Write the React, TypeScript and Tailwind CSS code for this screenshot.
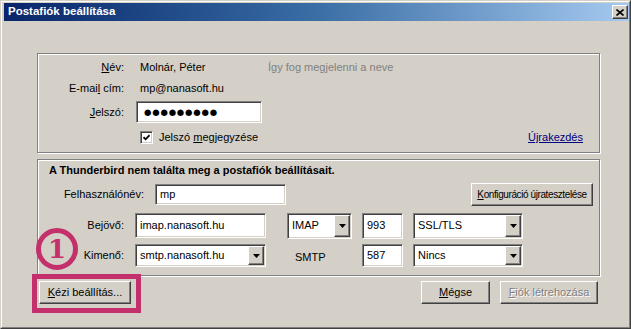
import type { ReactNode } from "react";

const sunken =
  "border border-t-[#808080] border-l-[#808080] border-b-white border-r-white shadow-[inset_1px_1px_0_#404040,inset_-1px_-1px_0_#d4d0c8] bg-white";
const raised =
  "border border-t-white border-l-white border-b-[#404040] border-r-[#404040] shadow-[inset_-1px_-1px_0_#808080] bg-[#d4d0c8]";
const etched =
  "border border-[#808080] shadow-[inset_1px_1px_0_white,1px_1px_0_white]";

function Arrow() {
  return (
    <div className={`${raised} flex h-full w-[16px] shrink-0 items-center justify-center`}>
      <svg width="7" height="4" viewBox="0 0 7 4">
        <polygon points="0,0 7,0 3.5,4" fill="#000" />
      </svg>
    </div>
  );
}

function Field({
  w,
  h,
  text,
  combo,
  className = "",
}: {
  w: string;
  h: string;
  text: ReactNode;
  combo?: boolean;
  className?: string;
}) {
  return (
    <div className={`${sunken} ${w} ${h} ${className} flex shrink-0 items-stretch p-[1px]`}>
      <div className="flex flex-1 items-center overflow-hidden whitespace-nowrap pl-[3px] text-black">
        {text}
      </div>
      {combo ? <Arrow /> : null}
    </div>
  );
}

function Label({ w, children }: { w: string; children: ReactNode }) {
  return <div className={`${w} shrink-0 text-right text-black`}>{children}</div>;
}

function Button({
  w,
  children,
  disabled,
  className = "",
}: {
  w: string;
  children: ReactNode;
  disabled?: boolean;
  className?: string;
}) {
  return (
    <div
      className={`${raised} ${w} ${className} flex h-[23px] shrink-0 items-center justify-center whitespace-nowrap ${
        disabled ? "text-[#808080] [text-shadow:1px_1px_0_#fff]" : "text-black"
      }`}
    >
      {children}
    </div>
  );
}

export default function App() {
  return (
    <div className="relative h-[329px] w-[631px] overflow-hidden bg-[#d4d0c8] font-['Liberation_Sans',Arial,sans-serif] text-[11px] leading-none">
      <div className="h-full w-full border border-t-[#d4d0c8] border-l-[#d4d0c8] border-b-[#404040] border-r-[#404040]">
        <div className="flex h-full w-full flex-col border border-t-white border-l-white border-b-[#808080] border-r-[#808080] pl-[2px] pt-[1px] pb-[1px]">
          {/* title bar */}
          <div className="flex h-[18px] shrink-0 items-center justify-between bg-linear-to-r from-[#0a246a] via-[#3a6ea5] to-[#a6caf0] pl-[4px] pr-[1px]">
            <span className="text-[11.5px] font-bold text-white">Postafiók beállítása</span>
            <div className={`${raised} flex h-[14px] w-[16px] items-center justify-center`}>
              <svg width="8" height="7" viewBox="0 0 8 7">
                <path d="M0.5 0.5 L7.5 6.5 M7.5 0.5 L0.5 6.5" stroke="#000" strokeWidth="1.6" />
              </svg>
            </div>
          </div>

          {/* body */}
          <div className="flex flex-1 flex-col pl-[33px] pr-[29px]">
            <div className={`${etched} mt-[32px] w-[563px] pt-[3px] pb-[5px]`}>
              <div className="flex h-[20px] items-center">
                <Label w="w-[86px]">
                  <u>N</u>év:
                </Label>
                <div className="ml-[12px] w-[132px] pl-[4px]">Molnár, Péter</div>
                <div className="text-[#808080]">Így fog megjelenni a neve</div>
              </div>
              <div className="flex h-[22px] items-center">
                <Label w="w-[86px]">
                  E-mai<u>l</u> cím:
                </Label>
                <div className="ml-[12px] pl-[4px]">mp@nanasoft.hu</div>
              </div>
              <div className="mt-[2px] flex h-[22px] items-center">
                <Label w="w-[86px]">
                  <u>J</u>elszó:
                </Label>
                <Field
                  w="w-[126px]"
                  h="h-[22px]"
                  className="ml-[12px]"
                  text={
                    <span className="pl-[3px] font-['DejaVu_Sans',sans-serif] text-[8.5px] tracking-[0.8px]">
                      ●●●●●●●●●
                    </span>
                  }
                />
              </div>
              <div className="mt-[4px] flex h-[20px] items-center">
                <div className="w-[86px] shrink-0" />
                <div className={`${sunken} ml-[16px] flex h-[13px] w-[13px] items-center justify-center`}>
                  <svg width="7" height="7" viewBox="0 0 7 7">
                    <path d="M0.5 3.2 L2.6 5.3 L6.5 1.2" stroke="#000" strokeWidth="1.7" fill="none" />
                  </svg>
                </div>
                <div className="ml-[6px]">
                  Jelszó <u>m</u>egjegyzése
                </div>
                <div className="ml-auto mr-[16px] text-[#000080] underline">Újrakezdés</div>
              </div>
            </div>

            <div className={`${etched} mt-[6px] w-[563px] pb-[8px]`}>
              <div className="flex h-[20px] items-center pl-[11px] font-bold">
                A Thunderbird nem találta meg a postafiók beállításait.
              </div>
              <div className="mt-[4px] flex h-[21px] items-center">
                <Label w="w-[106px]">Felhasználónév:</Label>
                <Field w="w-[131px]" h="h-[21px]" className="ml-[11px]" text="mp" />
                <Button w="w-[122px]" className="ml-auto mr-[6px] h-[21px]">
                  <span className="text-[10px] tracking-[-0.4px]">
                    <u>K</u>onfiguráció újratesztelése
                  </span>
                </Button>
              </div>
              <div className="mt-[8px] flex h-[25px] items-center">
                <Label w="w-[86px]">Bejövő:</Label>
                <Field w="w-[131px]" h="h-[25px]" className="ml-[11px]" text="imap.nanasoft.hu" />
                <Field w="w-[65px]" h="h-[26px]" className="ml-[21px]" text="IMAP" combo />
                <Field w="w-[41px]" h="h-[26px]" className="ml-[10px]" text="993" />
                <Field w="w-[110px]" h="h-[26px]" className="ml-[10px]" text="SSL/TLS" combo />
              </div>
              <div className="mt-[6px] flex h-[23px] items-center">
                <Label w="w-[86px]">Kimenő:</Label>
                <Field w="w-[131px]" h="h-[23px]" className="ml-[11px]" text="smtp.nanasoft.hu" combo />
                <div className="ml-[29px] w-[67px] shrink-0 pt-[4px]">SMTP</div>
                <Field w="w-[41px]" h="h-[23px]" text="587" />
                <Field w="w-[110px]" h="h-[23px]" className="ml-[10px]" text="Nincs" combo />
              </div>
            </div>

            <div className="mt-[5px] flex items-center">
              <Button w="w-[92px]" className="ml-[2px]">
                <span>
                  <u>K</u>ézi beállítás...
                </span>
              </Button>
              <Button w="w-[69px]" className="ml-auto">
                <span>
                  <u>M</u>égse
                </span>
              </Button>
              <Button w="w-[98px]" disabled className="ml-[10px] mr-[2px]">
                <span>
                  <u>F</u>iók létrehozása
                </span>
              </Button>
            </div>
          </div>
        </div>
      </div>

      {/* annotation overlay */}
      <div className="absolute left-[32px] top-[274px] h-[39px] w-[109px] border-[5px] border-[#c3306c]" />
      <div className="absolute left-[36px] top-[228px] flex h-[42px] w-[42px] items-center justify-center rounded-full border-[5px] border-[#c3306c] font-['DejaVu_Serif',serif] text-[26px] font-bold text-[#c3306c]">
        <span className="-mt-[1px]">1</span>
      </div>
    </div>
  );
}
